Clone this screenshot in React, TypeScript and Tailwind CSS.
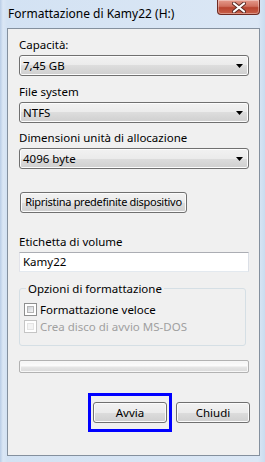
import React from "react";

const font = "font-['Segoe_UI','Noto_Sans',sans-serif]";

function Combo({ value }: { value: string }) {
  return (
    <div className="flex h-[21px] w-[230px] items-center justify-between rounded-[3px] border border-[#707070] bg-[linear-gradient(#f2f2f2_0%,#ebebeb_50%,#dddddd_50%,#cfcfcf_100%)] pl-[3px] pr-[5px] shadow-[inset_0_0_0_1px_#fcfcfc]">
      <span className="leading-none">{value}</span>
      <svg width="7" height="4" viewBox="0 0 7 4">
        <path d="M0 0h7L3.5 4z" fill="#000" />
      </svg>
    </div>
  );
}

function Button({ label, className = "" }: { label: string; className?: string }) {
  return (
    <div
      className={
        "flex h-[21px] items-center justify-center whitespace-nowrap rounded-[3px] border border-[#707070] bg-[linear-gradient(#f2f2f2_0%,#ebebeb_50%,#dddddd_50%,#cfcfcf_100%)] shadow-[inset_0_0_0_1px_#fbfbfb] " +
        className
      }
    >
      {label}
    </div>
  );
}

function Check({ label, disabled }: { label: string; disabled?: boolean }) {
  return (
    <div className="flex h-[13px] items-center gap-[3px]">
      <div
        className={
          "h-[13px] w-[13px] border bg-white p-[2px] " +
          (disabled ? "border-[#c5c5c5]" : "border-[#8e8f8f]")
        }
      >
        <div
          className={
            "h-full w-full border " +
            (disabled
              ? "border-[#e4e4e4] bg-[#f4f4f4]"
              : "border-[#b5b5b5] bg-[linear-gradient(135deg,#cbcfd5,#f6f6f6)]")
          }
        />
      </div>
      <span className={disabled ? "text-[#a0a0a0]" : "text-black"}>{label}</span>
    </div>
  );
}

export default function App() {
  return (
    <div
      className={
        "flex h-[462px] w-[265px] flex-col overflow-hidden bg-[linear-gradient(90deg,#b9cde6_0px,#dbe7f5_3px,#d3e2f3_7px,#dbe7f5_258px,#cadcef_265px)] text-[11.5px] text-black " +
        font
      }
    >
      {/* title bar */}
      <div className="flex h-[28px] shrink-0 items-start justify-between">
        <div className="pl-[8px] pt-[6px] text-[12px] leading-[15px] text-black">
          Formattazione di Kamy22 (H:)
        </div>
        <div className="mr-[5px] flex h-[15px] w-[43px] items-center justify-center rounded-b-[4px] border border-t-0 border-[#6e2a22] bg-[linear-gradient(#e59a8c_0%,#d0705e_45%,#b8442f_55%,#c9604a_100%)] shadow-[inset_0_0_0_1px_rgba(255,255,255,0.35)]">
          <svg width="14" height="11" viewBox="0 0 14 11">
            <path
              d="M2 1.5L12 9.5M12 1.5L2 9.5"
              stroke="#5a2a24"
              strokeWidth="4"
              strokeLinecap="round"
            />
            <path
              d="M2 1.5L12 9.5M12 1.5L2 9.5"
              stroke="#ffffff"
              strokeWidth="2.2"
              strokeLinecap="round"
            />
          </svg>
        </div>
      </div>

      {/* client area */}
      <div className="mx-[7px] flex h-[428px] w-[253px] shrink-0 flex-col border border-[#84909e] bg-[#f0f0f0] pl-[11px]">
        <div className="mt-[8px] h-[15px] leading-[15px]">Capacità:</div>
        <div className="mt-[3px]">
          <Combo value="7,45 GB" />
        </div>
        <div className="mt-[8px] h-[15px] leading-[15px]">File system</div>
        <div className="mt-[3px]">
          <Combo value="NTFS" />
        </div>
        <div className="mt-[7px] h-[15px] leading-[15px]">Dimensioni unità di allocazione</div>
        <div className="mt-[3px]">
          <Combo value="4096 byte" />
        </div>

        <Button
          label="Ripristina predefinite dispositivo"
          className="ml-[1px] mt-[23px] w-[167px] text-[11px] tracking-[-0.3px]"
        />

        <div className="mt-[21px] h-[15px] leading-[15px]">Etichetta di volume</div>
        <div className="mt-[3px] flex h-[20px] w-[230px] items-center border border-[#abadb3] border-b-[#e3e9ef] border-l-[#e2e3ea] border-r-[#dbdfe6] bg-white pl-[3px]">
          Kamy22
        </div>

        {/* group box */}
        <div className="relative mt-[16px] h-[58px] w-[227px] rounded-[3px] border border-[#d5dfe5] pl-[4px] pt-[14px]">
          <div className="absolute left-[6px] top-[-8px] bg-[#f0f0f0] px-[2px] leading-[15px]">
            Opzioni di formattazione
          </div>
          <Check label="Formattazione veloce" />
          <div className="mt-[4px]">
            <Check label="Crea disco di avvio MS-DOS" disabled />
          </div>
        </div>

        {/* progress */}
        <div className="mt-[14px] h-[13px] w-[230px] rounded-[2px] border border-[#b2b2b2] bg-[linear-gradient(#f3f3f3_0%,#fcfcfc_40%,#e4e4e4_60%,#dadada_100%)] shadow-[inset_0_0_0_1px_#f7f7f7]" />

        {/* buttons */}
        <div className="mt-[20px] flex items-center">
          <div className="ml-[69px] border-[3px] border-[#0000ff] px-[2px] py-[6px]">
            <Button
              label="Avvia"
              className="w-[74px] border-[#3c7fb1] bg-[linear-gradient(#eef4f9_0%,#e6eef5_50%,#d8e2ec_50%,#cfdae5_100%)] shadow-[inset_0_0_0_1px_#6fd3f5]"
            />
          </div>
          <Button label="Chiudi" className="ml-[4px] w-[74px]" />
        </div>
      </div>
    </div>
  );
}
